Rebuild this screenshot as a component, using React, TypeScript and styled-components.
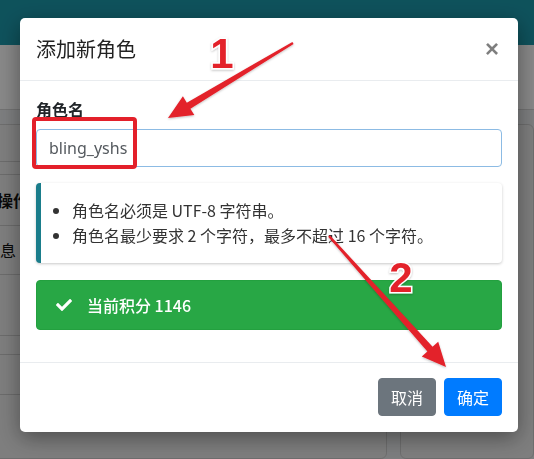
import React from "react";
import styled, { createGlobalStyle } from "styled-components";
import { FaCheck } from "react-icons/fa";

const GlobalStyle = createGlobalStyle`
  html, body {
    margin: 0;
    padding: 0;
    width: 534px;
    height: 459px;
    overflow: hidden;
    font-family: "Noto Sans", "Noto Sans CJK SC", sans-serif;
    color: #212529;
  }
`;

/* ---------- page behind the dialog ---------- */

const Page = styled.div`
  width: 534px;
  height: 459px;
  background: #e4e6e8;
  display: flex;
  flex-direction: column;
  overflow: hidden;
`;

const Navbar = styled.div`
  height: 45px;
  flex-shrink: 0;
  background: #1b95a7;
`;

const ContentHeader = styled.div`
  height: 64px;
  flex-shrink: 0;
  background: #f7f7f7;
  border-bottom: 1px solid #d0d0d0;
`;

const Columns = styled.div`
  flex: 1;
  display: grid;
  grid-template-columns: 397px 1fr;
  gap: 13px;
  padding-top: 14px;
  margin-left: -10px;
`;

const Card = styled.div`
  background: #e6e6e6;
  border: 1px solid #c8c8c8;
  border-radius: 6px;
  height: 333px;
  display: flex;
  flex-direction: column;
  overflow: hidden;
`;

const TableRow = styled.div<{ $h: number; $bold?: boolean }>`
  height: ${(p) => p.$h}px;
  flex-shrink: 0;
  border-bottom: 1px solid #c4c4c4;
  display: flex;
  align-items: center;
  font-size: 16px;
  font-weight: ${(p) => (p.$bold ? 700 : 400)};
  font-family: "Noto Sans CJK SC", sans-serif;
  color: #111;
  white-space: nowrap;
`;

const Cell = styled.span<{ $shift: number }>`
  margin-left: ${(p) => p.$shift}px;
`;

/* ---------- dialog ---------- */

const Backdrop = styled.div`
  position: fixed;
  inset: 0;
  background: rgba(0, 0, 0, 0.45);
`;

const Dialog = styled.div`
  position: fixed;
  top: 18px;
  left: 20px;
  width: 498px;
  background: #fff;
  border-radius: 5px;
  box-shadow: 0 6px 22px rgba(0, 0, 0, 0.4);
  display: flex;
  flex-direction: column;
`;

const Header = styled.div`
  display: flex;
  align-items: center;
  justify-content: space-between;
  padding: 16px;
  border-bottom: 1px solid #e9ecef;
`;

const Title = styled.h5`
  margin: 0;
  font-size: 20px;
  line-height: 30px;
  font-weight: 400;
  font-family: "Noto Sans CJK SC", sans-serif;
  color: #222;
`;

const Close = styled.button`
  border: 0;
  background: none;
  padding: 0 3px 0 0;
  font-size: 24px;
  line-height: 1;
  font-weight: 700;
  color: #000;
  opacity: 0.5;
  font-family: "Liberation Sans", sans-serif;
`;

const Body = styled.div`
  padding: 16px;
  display: flex;
  flex-direction: column;
`;

const Label = styled.label`
  font-size: 16px;
  line-height: 24px;
  font-weight: 700;
  margin-bottom: 8px;
  font-family: "Noto Sans CJK SC", sans-serif;
  color: #212529;
`;

const Input = styled.input`
  height: 38px;
  box-sizing: border-box;
  padding: 6px 12px;
  border: 1px solid #8cbbe4;
  border-radius: 4px;
  font-size: 16px;
  color: #54595e;
  font-family: "Noto Sans", sans-serif;
  margin-bottom: 16px;
  outline: none;
`;

const Callout = styled.div`
  border-left: 5px solid #1a7d8b;
  border-radius: 4px;
  background: #fff;
  box-shadow: 0 1px 3px rgba(0, 0, 0, 0.22);
  padding: 15px 20px;
  margin-bottom: 17px;
`;

const Rules = styled.ul`
  margin: 0;
  padding-left: 11px;
  font-size: 16px;
  line-height: 25px;
  font-family: "Noto Sans CJK SC", sans-serif;
  color: #333;
`;

const Alert = styled.div`
  display: flex;
  align-items: center;
  gap: 15px;
  background: #28a745;
  border: 1px solid #23a03f;
  border-radius: 4px;
  padding: 12px 19px;
  line-height: 24px;
  color: #fff;
  font-size: 16px;
  font-weight: 500;
  font-family: "Noto Sans CJK SC", sans-serif;
  margin-bottom: 16px;
`;

const Footer = styled.div`
  display: flex;
  justify-content: flex-end;
  gap: 8px;
  padding: 15px 16px 16px;
  border-top: 1px solid #e9ecef;
`;

const Button = styled.button<{ $variant: "secondary" | "primary" }>`
  height: 38px;
  padding: 0 12px;
  border: 1px solid ${(p) => (p.$variant === "primary" ? "#007bff" : "#6c757d")};
  background: ${(p) => (p.$variant === "primary" ? "#007bff" : "#6c757d")};
  color: #fff;
  border-radius: 4px;
  font-size: 16px;
  font-family: "Noto Sans CJK SC", sans-serif;
`;

/* ---------- annotations drawn on top ---------- */

const Annotations = styled.svg`
  position: fixed;
  inset: 0;
  pointer-events: none;
`;

const Num = styled.text`
  font-family: "Liberation Sans", Arial, sans-serif;
  font-weight: 700;
  font-size: 42px;
  fill: #e3202a;
  stroke: #fff;
  stroke-width: 3px;
  paint-order: stroke;
`;

const App: React.FC = () => {
  return (
    <>
      <GlobalStyle />
      <Page>
        <Navbar />
        <ContentHeader />
        <Columns>
          <Card>
            <TableRow $h={36} />
            <TableRow $h={12} />
            <TableRow $h={50} $bold>
              <Cell $shift={6}>操作</Cell>
            </TableRow>
            <TableRow $h={48}>
              <Cell $shift={-7}>信息</Cell>
            </TableRow>
            <TableRow $h={60} />
            <TableRow $h={18} />
            <TableRow $h={39} />
          </Card>
          <Card />
        </Columns>
      </Page>
      <Backdrop />
      <Dialog>
        <Header>
          <Title>添加新角色</Title>
          <Close>×</Close>
        </Header>
        <Body>
          <Label>角色名</Label>
          <Input defaultValue="bling_yshs" />
          <Callout>
            <Rules>
              <li>角色名必须是 UTF-8 字符串。</li>
              <li>角色名最少要求 2 个字符，最多不超过 16 个字符。</li>
            </Rules>
          </Callout>
          <Alert>
            <FaCheck size={16} />
            <span>当前积分 1146</span>
          </Alert>
        </Body>
        <Footer>
          <Button $variant="secondary">取消</Button>
          <Button $variant="primary">确定</Button>
        </Footer>
      </Dialog>
      <Annotations width={534} height={459} viewBox="0 0 534 459">
        <defs>
          <filter id="soft" x="-10%" y="-10%" width="120%" height="120%">
            <feDropShadow dx="0" dy="1" stdDeviation="1" floodColor="#000" floodOpacity="0.25" />
          </filter>
        </defs>
        <rect x={34} y={119} width={101} height={48} rx={2} fill="none" stroke="#e3202a" strokeWidth={4} />
        <polygon
          filter="url(#soft)"
          fill="#e3202a"
          points="292.4,42 186.8,102.7 182.9,96.3 168,118 194.3,115.1 190.4,108.7 293.6,44"
        />
        <polygon
          filter="url(#soft)"
          fill="#e3202a"
          points="328.1,236.8 427.4,351.4 421.8,356.4 446,367 438.2,341.8 432.6,346.8 329.9,235.2"
        />
        <Num x={222} y={68} textAnchor="middle" filter="url(#soft)">
          1
        </Num>
        <Num x={401} y={292} textAnchor="middle" filter="url(#soft)">
          2
        </Num>
      </Annotations>
    </>
  );
};

export default App;
